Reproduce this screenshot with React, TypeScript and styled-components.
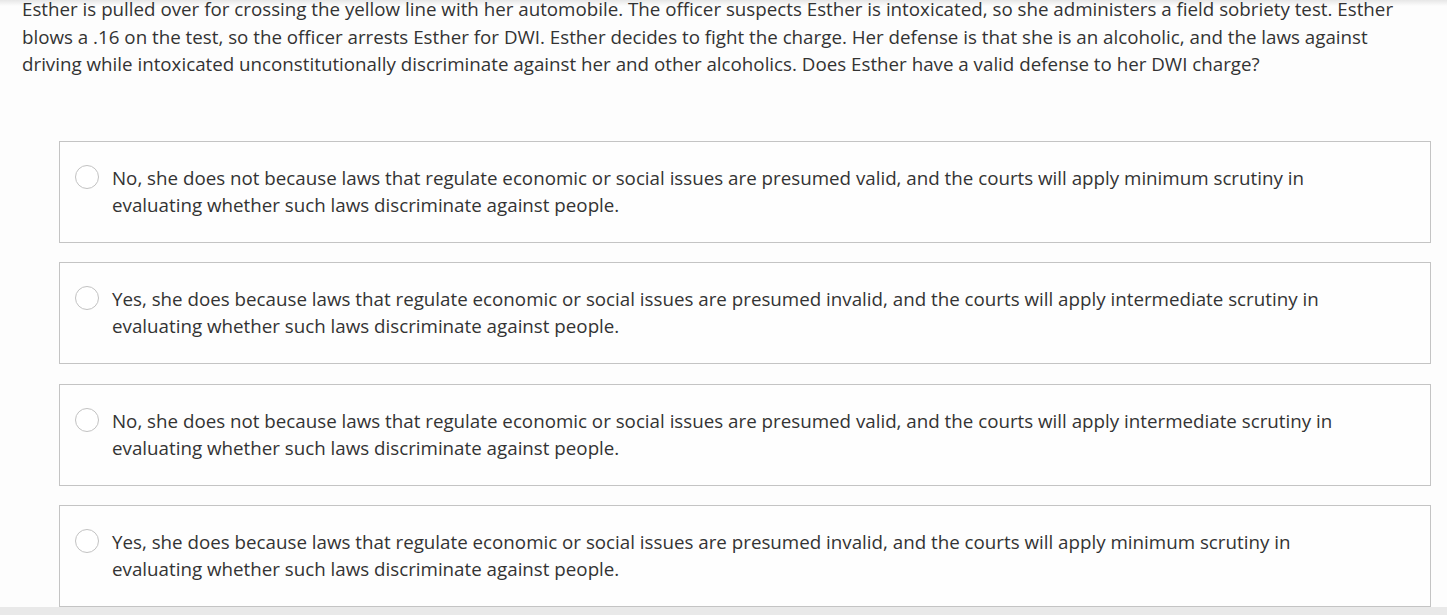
import React from "react";
import styled, { createGlobalStyle } from "styled-components";

const GlobalStyle = createGlobalStyle`
  html, body {
    margin: 0;
    padding: 0;
    background: #fdfdfd;
    overflow: hidden;
  }
  body {
    font-family: "Open Sans", "Liberation Sans", Arial, sans-serif;
    color: #333333;
  }
`;

const Page = styled.div`
  display: flex;
  flex-direction: column;
  width: 1447px;
  height: 615px;
  overflow: hidden;
  position: relative;
`;

const TopShade = styled.div`
  position: absolute;
  top: 0;
  left: 0;
  right: 0;
  height: 6px;
  background: linear-gradient(to bottom, rgba(0, 0, 0, 0.09), rgba(0, 0, 0, 0));
  pointer-events: none;
`;

const Question = styled.p`
  margin: -5px 0 0 0;
  padding: 0 22px;
  font-size: 18.75px;
  line-height: 27.5px;
  color: #333333;
`;

const Options = styled.div`
  display: flex;
  flex-direction: column;
  gap: 19.5px;
  margin: 63px 16px 0 59px;
`;

const Option = styled.label`
  display: flex;
  align-items: flex-start;
  gap: 13px;
  box-sizing: border-box;
  height: 102px;
  padding: 22px 55px 24px 15px;
  border: 1px solid #c4c4c4;
  background: #fefefe;
  cursor: pointer;
`;

const Radio = styled.span`
  flex: none;
  box-sizing: border-box;
  width: 24px;
  height: 24px;
  margin-top: 1px;
  border-radius: 50%;
  border: 1px solid #c2c2c2;
  background: #ffffff;
`;

const OptionText = styled.span`
  font-size: 18.75px;
  line-height: 27px;
  color: #333333;
`;

const BottomBar = styled.div`
  margin-top: auto;
  height: 8px;
  background: #e9e9e9;
`;

const question =
  "Esther is pulled over for crossing the yellow line with her automobile. The officer suspects Esther is intoxicated, so she administers a field sobriety test. Esther blows a .16 on the test, so the officer arrests Esther for DWI. Esther decides to fight the charge. Her defense is that she is an alcoholic, and the laws against driving while intoxicated unconstitutionally discriminate against her and other alcoholics. Does Esther have a valid defense to her DWI charge?";

const answers = [
  "No, she does not because laws that regulate economic or social issues are presumed valid, and the courts will apply minimum scrutiny in evaluating whether such laws discriminate against people.",
  "Yes, she does because laws that regulate economic or social issues are presumed invalid, and the courts will apply intermediate scrutiny in evaluating whether such laws discriminate against people.",
  "No, she does not because laws that regulate economic or social issues are presumed valid, and the courts will apply intermediate scrutiny in evaluating whether such laws discriminate against people.",
  "Yes, she does because laws that regulate economic or social issues are presumed invalid, and the courts will apply minimum scrutiny in evaluating whether such laws discriminate against people.",
];

export default function App() {
  return (
    <>
      <GlobalStyle />
      <Page>
        <Question>{question}</Question>
        <Options>
          {answers.map((a, i) => (
            <Option key={i}>
              <Radio />
              <OptionText>{a}</OptionText>
            </Option>
          ))}
        </Options>
        <BottomBar />
        <TopShade />
      </Page>
    </>
  );
}
